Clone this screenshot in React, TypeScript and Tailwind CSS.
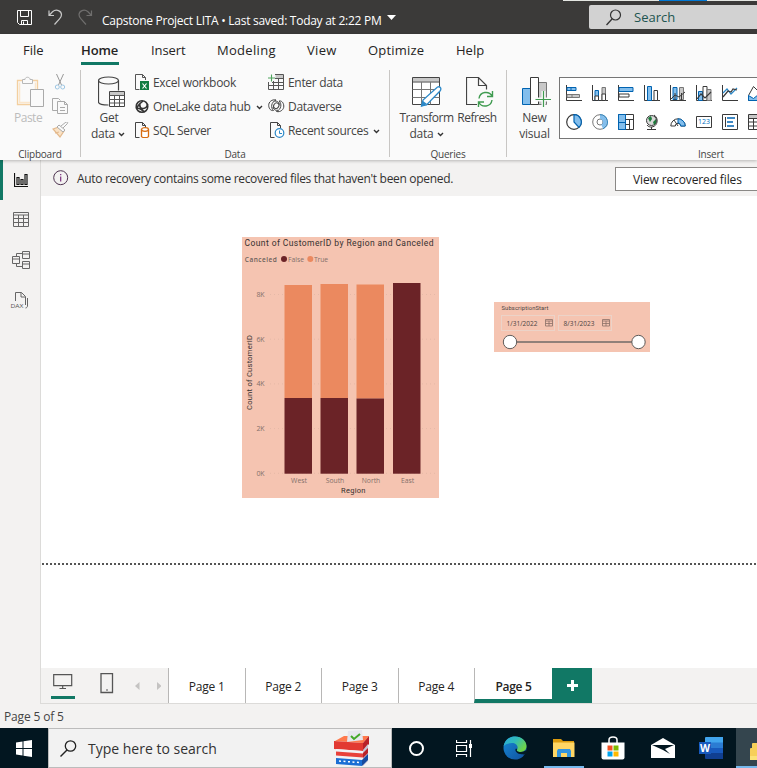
import React from "react";

type IconProps = { w: number; h: number; box: string; className?: string; children: React.ReactNode };

function Icon({ w, h, box, className = "", children }: IconProps) {
  return (
    <svg width={w} height={h} viewBox={box} fill="none" className={`block shrink-0 ${className}`}>
      {children}
    </svg>
  );
}

const Chevron = () => (
  <Icon w={7} h={5} box="0 0 7 5" className="mt-px">
    <path d="M1 1l2.5 2.5L6 1" stroke="#333" strokeWidth="1.4" />
  </Icon>
);

function TitleBar() {
  return (
    <header className="relative flex h-[34px] shrink-0 items-start bg-[#3b3a39] text-white">
      <div className="absolute left-[563px] top-0 flex h-px w-[194px] bg-[#e4e6e2]">
        <div className="ml-24 h-px w-12 bg-[#0078d4]" />
      </div>
      <Icon w={16} h={16} box="0 0 16 16" className="ml-[17px] mt-[10px]">
        <path d="M.5.5h14v14h-12l-2-2zM3.5.5v6h8v-6M4.500 14.500v-4h6v4M6.500 11.500v3" stroke="#fff" />
      </Icon>
      <Icon w={16} h={17} box="0 0 16 17" className="ml-[15px] mt-[9px]">
        <path d="M1 1.500v5h5M1.500 6l3-3.200c4-3.300 9-.8 9 3 0 2-1 3-2 4L6.500 15.500" stroke="#c8c8c8" strokeWidth="1.2" />
      </Icon>
      <Icon w={16} h={17} box="0 0 16 17" className="ml-[14px] mt-[9px]">
        <path d="M13.500 1.500v5h-5M13 6l-3-3.200c-4-3.300-9-.8-9 3 0 2 1 3 2 4L8 15.500" stroke="#6f6e6d" strokeWidth="1.2" />
      </Icon>
      <span className="ml-[8px] mt-[12px] w-[280px] whitespace-nowrap text-[12px] leading-[17px] tracking-[-0.27px]">
        Capstone Project LITA • Last saved: Today at 2:22 PM
      </span>
      <Icon w={9} h={5} box="0 0 9 5" className="ml-[5px] mt-[15px]">
        <path d="M0 0h9L4.500 5z" fill="#fff" />
      </Icon>
      <div className="ml-auto mt-[5px] flex h-6 w-[168px] items-center rounded-l-[2px] bg-[#d2d2d2] pl-[17px]">
        <Icon w={16} h={17} box="0 0 16 17">
          <circle cx="9.500" cy="6" r="5" stroke="#333" strokeWidth="1.200" />
          <path d="M6 10L.5 16" stroke="#333" strokeWidth="1.300" />
        </Icon>
        <span className="ml-[12px] text-[13px] leading-4 text-[#215550]">Search</span>
      </div>
    </header>
  );
}

function MenuTabs() {
  return (
    <nav className="flex h-[32px] shrink-0 whitespace-nowrap pl-[23px] text-[13px] leading-[18px] text-[#252423] *:pt-[7px]">
      <span className="w-[58px]">File</span>
      <span className="w-[70px]">
        <span className="inline-block h-6 w-[38px] border-b-[3px] border-[#117865] font-semibold tracking-[-0.1px]">Home</span>
      </span>
      <span className="w-[66px] tracking-[-0.1px]">Insert</span>
      <span className="w-[90px] tracking-[0.3px]">Modeling</span>
      <span className="w-[61px] tracking-[0.3px]">View</span>
      <span className="w-[88px] tracking-[0.2px]">Optimize</span>
      <span>Help</span>
    </nav>
  );
}

function Group({ label, className, children }: { label: string; className: string; children: React.ReactNode }) {
  return (
    <section className={`flex h-[87px] shrink-0 flex-col ${className}`}>
      <div className="flex h-[76px] shrink-0">{children}</div>
      <div className="shrink-0 text-center text-[10px] leading-[16px] tracking-[-0.2px] text-[#444]">{label}</div>
    </section>
  );
}

function Row({ icon, text, chevron }: { icon: React.ReactNode; text: string; chevron?: boolean }) {
  return (
    <div className="flex h-6 items-center whitespace-nowrap">
      <div className="w-[18px]">{icon}</div>
      <span className="mt-[2px] text-[12px] leading-5 tracking-[-0.32px] text-[#444]">{text}</span>
      {chevron && <span className="ml-[5px] mt-[2px]"><Chevron /></span>}
    </div>
  );
}

const docPath = "M4.500 15.500h-4V.5h7l3 3V6M7.500.5v3h3";

function ClipboardGroup() {
  return (
    <Group label="Clipboard" className="w-20">
      <div className="flex w-[48px] flex-col pl-[14px]">
        <Icon w={32} h={32} box="14 75 32 32" className="mt-[5px]">
          <path d="M22 80.500h-4.500v24H31M33 80.500h4.500v9" stroke="#f3cf9f" strokeWidth="1.300" />
          <path d="M19.500 82.500v20H30M35.500 82.500v7" stroke="#fbe6cb" strokeWidth="1.500" />
          <path d="M22.500 83.500v-4h2.500c0-3 5-3 5 0h2.500v4z" stroke="#b8b8b8" fill="#fafafa" />
          <path d="M30.500 89.500h13v17h-13z" stroke="#aaa" fill="#fafafa" />
        </Icon>
        <span className="text-[12px] leading-[22px] tracking-[-0.5px] text-[#bcbcbc]">Paste</span>
      </div>
      <div className="flex flex-col gap-2 pl-1 pt-[4px]">
        <Icon w={16} h={16} box="52 74 16 16">
          <path d="M56.500 74l5 11M63.500 74l-5 11" stroke="#999" />
          <circle cx="57.300" cy="87" r="2" stroke="#9ec7e4" /><circle cx="62.700" cy="87" r="2" stroke="#9ec7e4" />
        </Icon>
        <Icon w={17} h={16} box="52 98 17 16">
          <path d="M57.500 110.500h-5v-12h6l2 2M57.500 101.500h7l3 3v9h-10zM64.500 101.500v3h3M60 107.500h5M60 110.500h5" stroke="#aaa" />
        </Icon>
        <Icon w={17} h={16} box="52 122 17 16">
          <path d="M53 129l6-2 5 4-4 6zM55 133l4-1" fill="#f9e3c8" stroke="#e4b98c" strokeWidth="1.200" />
          <path d="M57 127l2-2 6 5-2 2zM61 126l5-4c2-.5 2 1 1 2l-4 4" stroke="#aaa" fill="#fafafa" />
        </Icon>
      </div>
    </Group>
  );
}

function DataGroup() {
  return (
    <Group label="Data" className="w-[309px] border-l border-[#c8c6c4]">
      <div className="flex w-[54px] flex-col items-center text-[12px] leading-4 text-[#444]">
        <Icon w={28} h={31} box="98 76 28 31" className="ml-[8px] mt-[6px]">
          <path d="M98.500 80.500v21.500c0 2 4 3 10 3M118.500 80.500v10" stroke="#444" strokeWidth="1.200" />
          <ellipse cx="108.500" cy="80.500" rx="10" ry="3.500" stroke="#444" strokeWidth="1.200" />
          <path d="M109.500 91.500h15v15h-15z" fill="#fff" stroke="#444" />
          <path d="M110 92h14v3h-14z" fill="#c8c8c8" />
          <path d="M109.500 95.500h15M109.500 99.500h15M109.500 103h15M114.500 95.500v11M119.500 95.500v11" stroke="#555" />
        </Icon>
        <span className="ml-[2px] mt-[3px] tracking-[-0.3px]">Get</span>
        <span className="flex items-center gap-[3px] tracking-[-0.2px]">data <Chevron /></span>
      </div>
      <div className="flex w-[133px] flex-col">
        <Row text="Excel workbook" icon={
          <Icon w={15} h={16} box="0 0 15 16">
            <path d={docPath} stroke="#555" />
            <path d="M5 7h9v9H5z" fill="#107c41" /><path d="M7.500 9.500l4 5M11.500 9.500l-4 5" stroke="#fff" strokeWidth="1.200" />
          </Icon>} />
        <Row text="OneLake data hub" chevron icon={
          <Icon w={15} h={15} box="0 0 15 15">
            <circle cx="7" cy="7.500" r="5.800" stroke="#333" strokeWidth="1.500" />
            <path d="M1 9.500L4.500 5 8 2M5 4c-1 4 1 6 3.500 5.500S12.500 7 12.500 5M1.500 9.500c3-1.500 5 1.500 7.500 3" stroke="#333" strokeWidth="1.600" />
          </Icon>} />
        <Row text="SQL Server" icon={
          <Icon w={15} h={16} box="0 0 15 16">
            <path d={docPath} stroke="#444" />
            <path d="M6.500 7.500v7c1 1.500 6 1.500 7 0v-7" fill="#fff" stroke="#d86c10" strokeWidth="1.300" />
            <ellipse cx="10" cy="7.500" rx="3.500" ry="1.800" fill="#fff" stroke="#d86c10" strokeWidth="1.300" />
          </Icon>} />
      </div>
      <div className="flex flex-col">
        <div className="[&>div>div]:w-5"><Row text="Enter data" icon={
          <Icon w={17} h={17} box="0 0 17 17">
            <path d="M7.500 1h8v3h-8z" fill="#c8c8c8" />
            <path d="M7 .5h8.500v15H.5V8M.5 11.500h15M4 8.500h11.500M7 4.500h8.500M5.500 7v8.500M10.500 4.500v11" stroke="#555" />
            <path d="M3.500.5v7M0 4h7" stroke="#4ea35d" strokeWidth="1.100" />
          </Icon>} /></div>
        <div className="[&>div>div]:w-5"><Row text="Dataverse" icon={
          <Icon w={17} h={14} box="0 0 17 14">
            <path d="M8 1C4 0 .5 3 .7 6.500S3 12 5.500 11.500C2.500 9 3 3 8 1zM8.500 12.500c4 1 7.500-2 7.300-5.500S13.500 1.500 11 2c3 2.500 2.500 8.500-2.500 10.500z" stroke="#444" />
            <ellipse cx="8.300" cy="6.700" rx="2.500" ry="3" transform="rotate(35 8.300 6.700)" stroke="#444" />
            <path d="M5 8c.5 3 3.500 4 5 3M11.500 5.500c-.5-3-3.500-4-5-3" stroke="#444" />
          </Icon>} /></div>
        <div className="[&>div>div]:w-5"><Row text="Recent sources" chevron icon={
          <Icon w={15} h={16} box="0 0 15 16" className="ml-[2px]">
            <path d={docPath} stroke="#444" />
            <circle cx="9.500" cy="11" r="4.300" fill="#fff" stroke="#2b88c8" strokeWidth="1.200" />
            <path d="M9.500 8.500v3H12" stroke="#2b88c8" />
          </Icon>} /></div>
      </div>
    </Group>
  );
}

function QueriesGroup() {
  return (
    <Group label="Queries" className="w-[117px] border-l border-[#c8c6c4] text-[12px] leading-4 text-[#444]">
      <div className="flex w-[73px] flex-col items-center">
        <Icon w={30} h={31} box="412 76 30 31" className="mt-[6px]">
          <path d="M412.500 77.500h27v27h-27z" fill="#fff" stroke="#444" />
          <path d="M413 78h26v3.500h-26z" fill="#c8c8c8" />
          <path d="M412.500 82h27" stroke="#444" />
          <path d="M412.500 89.500h27M412.500 97.500h27M421.500 82v22.500M430.500 82v22.500" stroke="#777" />
          <path d="M421.500 106l1.500-6 14.500-13c2.500-1 4.500 1.500 2.500 4L426.500 105z" fill="#fff" stroke="#2b88c8" strokeWidth="1.300" />
          <path d="M421 107l2-6 4 3z" fill="#2b88c8" />
        </Icon>
        <span className="mt-[3px] tracking-[-0.5px]">Transform</span>
        <span className="flex items-center gap-[3px] tracking-[-0.2px]">data <Chevron /></span>
      </div>
      <div className="flex w-[28px] flex-col items-center">
        <Icon w={28} h={31} box="465 76 28 31" className="ml-[5px] mt-[6px]">
          <path d="M476 104.500h-10.500v-27h12l8 8v4M477.500 77.500v8h8" stroke="#444" strokeWidth="1.200" />
          <path d="M478 98.500c1-7 10-8 13-2.500M491.500 91v5.500H486M491 100c-1 7-10 8-13 2.500M477.500 107.500V102H483" stroke="#3f9b50" strokeWidth="1.400" />
        </Icon>
        <span className="mt-[3px] tracking-[-0.5px]">Refresh</span>
      </div>
    </Group>
  );
}

const B = "#0063b1";
const F = "#83beec";
const K = "#3a3a3a";
const topVisuals = [
  <><path d="M.5 0v15.500H16" stroke={K} /><path d="M1 2.500h9v3H1z" fill={F} stroke={B} /><path d="M5 2v4" stroke={B} /><path d="M1 9.500h12.500v3H1z" fill="#c8c8c8" stroke="#777" /><path d="M6 9v4" stroke="#777" /></>,
  <><path d="M.5 0v15.500H16" stroke={K} /><path d="M3 5.500h3.500v10H3z" fill={F} stroke={B} /><path d="M3 11h3.500v4.500H3z" fill="#fff" stroke={K} /><path d="M10 2.500h3.500v13H10z" fill="#c8c8c8" stroke="#777" /><path d="M10 9h3.500v6.500H10z" fill="#fff" stroke={K} /></>,
  <><path d="M.5 0v15.500H16" stroke={K} /><path d="M1 2.500h14v4H1z" fill={F} stroke={B} /><path d="M1 9h10v3H1z" fill="#fff" stroke={K} /></>,
  <><path d="M.5 0v15.500H16" stroke={K} /><path d="M3.500 1.500h4v14h-4z" fill={F} stroke={B} /><path d="M10 5.500h3.500v10H10z" fill="#fff" stroke={K} /></>,
  <><path d="M.5 0v15.500H16" stroke={K} /><path d="M3 2.500h4v12H3z" fill={F} stroke={B} /><path d="M9.500 2.500h4v12h-4z" fill="#c8c8c8" stroke="#777" /><path d="M1 14l4-4 4 2 6-5M5 8v7M11.500 8v7" stroke={K} /></>,
  <><path d="M.5 0v15.500H16" stroke={K} /><path d="M2.500 6.500h4v9h-4z" fill={F} stroke={B} /><path d="M7 1.500h4v14H7z" fill="#fff" stroke={K} /><path d="M11 4.500h4v11h-4z" fill="#c8c8c8" stroke="#777" /><path d="M1 14l4-5 4 4 6-6" stroke={K} strokeWidth="1.200" /></>,
  <><path d="M.5 0v15.500H16" stroke={K} /><path d="M1 8l4-4 4 5 6-6" stroke="#2b88c8" strokeWidth="1.200" /><path d="M1 12l5-6 3 1 2-3 4 1" stroke={K} strokeWidth="1.200" /></>,
  <><path d="M.5 10.500l5-9 5 5v9H.5z" stroke={K} fill="#fff" /><path d="M.5 10.500l5 3 5-4v6H.5z" fill={F} stroke={B} /></>,
];
const bottomVisuals = [
  <><circle cx="8" cy="8" r="7.300" fill="#fff" stroke={K} strokeWidth="1.200" /><path d="M8 .7A7.300 7.300 0 0 1 13 13.300L8 8z" fill={F} stroke={B} strokeWidth="1.200" /></>,
  <><circle cx="8" cy="8" r="5" stroke="#fff" strokeWidth="4" /><circle cx="8" cy="8" r="7.300" stroke="#777" /><circle cx="8" cy="8" r="3" stroke="#777" /><path d="M8 3a5 5 0 0 1 2 9.500" stroke={F} strokeWidth="4" /><path d="M8 .7a7.300 7.300 0 0 1 3 14" stroke="#2b88c8" /></>,
  <><path d="M.5.5h15v15H.5z" fill="#fff" stroke={K} /><path d="M.5.5h7v15h-7z" fill={F} stroke={B} /><path d="M.5 8.500h7" stroke={B} /><path d="M7.500 5.500h8M11.500 5.500v10M7.500 10.500h4" stroke={K} /></>,
  <><circle cx="7.500" cy="6.500" r="5" fill="#d9d9d9" stroke={K} /><path d="M4 4l3-2 1 3-2 3zM9 8l3-3v4l-2 2z" fill="#1e7b3c" /><path d="M10 1c5 3 4 11-2 12-2 .3-4-.5-5-2M7.500 13v2.500M3 15.500h9" stroke={K} /></>,
  <><path d="M.8 12a7.200 7.200 0 0 1 14.400 0h-4.500a2.700 2.700 0 0 0-5.400 0z" fill="#fff" stroke={K} /><path d="M8 4.800a7.200 7.200 0 0 1 7.200 7.200h-4.500C10.700 10 9.500 9 8 9z" fill={F} stroke={B} /><path d="M4 6l4 6" stroke={K} /></>,
  <><path d="M.5 2.500h15v11H.5z" fill="#fff" stroke={K} /><text x="2" y="10" fontSize="7" textLength="12" fill="#006fbf" fontFamily="Open Sans, sans-serif">123</text></>,
  <><path d="M.5.5h15v15H.5z" fill="#fff" stroke={K} /><path d="M3.500 3v10" stroke={K} /><path d="M5 4h8M5 8h6M5 12h7" stroke={B} strokeWidth="1.700" /></>,
  <><path d="M.5.5h15v15H.5z" fill="#fff" stroke={K} /><path d="M1 1h14v3H1z" fill="#c8c8c8" /><path d="M.5 4.500h15M.5 8h15M.5 12h15M5.500 4.500v11M10.500 4.500v11" stroke={K} /></>,
];

function InsertGroup() {
  return (
    <section className="flex h-[87px] w-[251px] shrink-0 border-l border-[#c8c6c4] text-[12px] leading-4 text-[#444]">
      <div className="flex w-[52px] shrink-0 flex-col items-center pl-[3px]">
        <Icon w={30} h={31} box="522 76 30 31" className="ml-[4px] mt-[6px]">
          <path d="M522.500 88.500h8v16h-8z" fill={F} stroke={B} />
          <path d="M538.500 82.500h8v22h-8z" fill="#c8c8c8" stroke="#777" />
          <path d="M530.500 77.500h8v27h-8z" fill="#fff" stroke={K} />
          <path d="M543.500 91v16M535 99.500h16" stroke="#fafafa" strokeWidth="4" />
          <path d="M543.500 91v16M535.500 99.500H551" stroke="#3f9b50" strokeWidth="1.200" />
        </Icon>
        <span className="mt-[3px] tracking-[-0.2px]">New</span>
        <span className="tracking-[-0.2px]">visual</span>
      </div>
      <div className="w-[320px] shrink-0">
        <div className="mt-[7px] flex h-[62px] flex-col gap-[13px] border border-[#767676] bg-white pl-[6px] pt-[7px]">
          <div className="flex gap-[10px]">
            {topVisuals.map((v, i) => <Icon key={i} w={16} h={16} box="0 0 16 16">{v}</Icon>)}
          </div>
          <div className="flex gap-[10px]">
            {bottomVisuals.map((v, i) => <Icon key={i} w={16} h={16} box="0 0 16 16">{v}</Icon>)}
          </div>
        </div>
        <div className="mt-[7px] pl-[139px] text-[10px] leading-4 tracking-[-0.2px]">Insert</div>
      </div>
    </section>
  );
}

function Sidebar() {
  return (
    <aside className="flex w-[41px] shrink-0 flex-col border-r border-[#dcdbd9] bg-[#f3f2f1]">
      <div className="flex h-10 items-center border-l-[3px] border-[#117865] pl-[11px]">
        <Icon w={15} h={15} box="0 0 15 15">
          <path d="M.5 0v13.500H14M3 4.500h2v7H3zM7 6.500h2v5H7zM11 1.500h2v10h-2z" stroke="#111" strokeWidth="1.200" />
        </Icon>
      </div>
      <Icon w={17} h={16} box="0 0 17 16" className="ml-[13px] mt-[12px]">
        <path d="M.5.5h15v14H.5zM.5 3h15M.5 6.500h15M.5 10.500h15M5.500 3v11.500M10.500 3v11.500" stroke="#666" />
      </Icon>
      <Icon w={19} h={19} box="0 0 19 19" className="ml-[12px] mt-[23px]">
        <path d="M10.500.5h7v7h-7zM10.500 3h7M.5 5.500h7v7h-7zM.5 8h7M10.500 10.500h7v7h-7zM10.500 13h7M4.500 5.500v-3h6M4.500 12.500v3h6" stroke="#666" />
      </Icon>
      <Icon w={19} h={18} box="0 0 19 18" className="ml-[10px] mt-[22px]">
        <path d="M5.500 9V.5h6l4 4V13M11 .5V5h4.500M17.500 6v8c0 1-1 2-2 2" stroke="#666" />
        <path d="M1 10h14v6H1z" fill="#f3f2f1" />
        <text x=".5" y="15.800" fontSize="6" textLength="13" lengthAdjust="spacingAndGlyphs" fill="#555" fontFamily="Open Sans, sans-serif">DAX</text>
      </Icon>
    </aside>
  );
}

const bars = [
  { name: "West", x: 42.500, top: 48, split: 161 },
  { name: "South", x: 78.500, top: 47, split: 161 },
  { name: "North", x: 114.500, top: 47.500, split: 161.500 },
  { name: "East", x: 151, top: 46, split: 46 },
];

function BarChart() {
  return (
    <svg width="197" height="261" viewBox="0 0 197 261" className="absolute left-[201px] top-[41px] bg-[#f5c4b1]" fontFamily="Open Sans, sans-serif">
      <text x="2.500" y="9" fontSize="8.500" textLength="189" fill="#363130" fontFamily="Roboto, sans-serif">Count of CustomerID by Region and Canceled</text>
      <text x="2.800" y="25" fontSize="6.500" fontWeight="600" textLength="32" fill="#6b605b">Canceled</text>
      <circle cx="42" cy="22" r="3" fill="#6b2327" />
      <text x="46" y="25" fontSize="6.800" textLength="16" fill="#84706a">False</text>
      <circle cx="68.300" cy="22" r="3" fill="#eb895f" />
      <text x="72" y="25" fontSize="6.800" textLength="14" fill="#84706a">True</text>
      {["8K", "6K", "4K", "2K", "0K"].map((t, i) => (
        <g key={t}>
          <path d={`M28 ${57.500 + i * 44.700}h165`} stroke="#e5b9a7" strokeDasharray="1 3" />
          <text x="14.500" y={60 + i * 44.700} fontSize="7" textLength="8" fill="#84706a">{t}</text>
        </g>
      ))}
      {bars.map((b) => (
        <g key={b.name}>
          <rect x={b.x} y={b.top} width="27.500" height={b.split - b.top} fill="#eb895f" />
          <rect x={b.x} y={b.split} width="27.500" height={236.700 - b.split} fill="#6b2327" />
          <text x={b.x + 14.500} y="246" fontSize="6.800" textAnchor="middle" fill="#84706a">{b.name}</text>
        </g>
      ))}
      <text x="99" y="256" fontSize="7.500" textLength="24.500" fill="#363130" fontFamily="Roboto, sans-serif">Region</text>
      <text transform="translate(10 173) rotate(-90)" fontSize="7.500" textLength="75" fill="#363130" fontFamily="Roboto, sans-serif">Count of CustomerID</text>
    </svg>
  );
}

function DateSlicer() {
  return (
    <svg width="156" height="50" viewBox="0 0 156 50" className="absolute left-[453px] top-[106px] bg-[#f5c4b1]" fontFamily="Open Sans, sans-serif">
      <text x="7.500" y="8" fontSize="5.800" textLength="47" fill="#4b4542" fontFamily="Roboto, sans-serif">SubscriptionStart</text>
      {[{ x: 7.500, t: "1/31/2022" }, { x: 64.500, t: "8/31/2023" }].map((d) => (
        <g key={d.t}>
          <rect x={d.x} y="13.500" width="53" height="15" fill="none" stroke="#ecd3c8" />
          <text x={d.x + 5} y="24" fontSize="6.500" textLength="31" fill="#4b4542">{d.t}</text>
          <path d={`M${d.x + 44} 17.500h7v6.500h-7zM${d.x + 44} 19h7M${d.x + 44} 21.500h7M${d.x + 47.500} 19v5`} stroke="#8a7067" strokeWidth=".8" fill="none" />
        </g>
      ))}
      <path d="M16 40h128" stroke="#6f6a67" strokeWidth="1.700" />
      <circle cx="16" cy="40" r="6.700" fill="#fff" stroke="#5f5b59" />
      <circle cx="144.500" cy="40" r="6.700" fill="#fff" stroke="#5f5b59" />
    </svg>
  );
}

function PageTabs() {
  return (
    <div className="flex h-[36px] shrink-0 border-b border-[#dcdbd9] bg-[#f3f2f1] text-[12px]">
      <div className="flex w-[127px] items-start">
        <div className="ml-[10px] flex h-[31px] w-6 flex-col items-center border-b-[3px] border-[#117865] pt-[6px]">
          <Icon w={20} h={16} box="0 0 20 16">
            <path d="M.7.700h18v11H.700zM9.700 12v2.500M6.500 14.500h6.500" stroke="#555" strokeWidth="1.200" />
          </Icon>
        </div>
        <Icon w={14} h={21} box="0 0 14 21" className="ml-[25px] mt-[5px]">
          <path d="M1 .700h11.500v18.800H1z" stroke="#555" strokeWidth="1.300" /><path d="M6 17h2" stroke="#555" />
        </Icon>
        <Icon w={27} h={9} box="0 0 27 9" className="ml-[20px] mt-[14px]">
          <path d="M5.500 0v8L1 4zM23 0v8l4.500-4z" fill="#c4c3c2" />
        </Icon>
      </div>
      {["Page 1", "Page 2", "Page 3", "Page 4"].map((p) => (
        <div key={p} className="flex w-[76.500px] items-center justify-center border-l border-[#b8b7b6] bg-white pt-[3px] tracking-[-0.2px] text-[#252423]">{p}</div>
      ))}
      <div className="flex w-[78px] items-center justify-center border-b-4 border-l border-b-[#117865] border-l-[#b8b7b6] bg-white pt-[7px] font-semibold tracking-[-0.3px] text-[#252423]">Page 5</div>
      <div className="flex w-10 items-center justify-center bg-[#117865] pb-px">
        <Icon w={11} h={11} box="0 0 11 11"><path d="M5.500 0v11M0 5.500h11" stroke="#fff" strokeWidth="3" /></Icon>
      </div>
    </div>
  );
}

function Taskbar() {
  return (
    <footer className="flex h-10 shrink-0 bg-[#021620]">
      <div className="flex w-12 items-center justify-center">
        <Icon w={16} h={17} box="0 0 16 17">
          <path d="M0 2.500l6.500-1V8H0zM7.500 1.300L16 0v8H7.500zM0 9h6.500v6.500l-6.500-1zM7.500 9H16v8l-8.500-1.300z" fill="#fff" />
        </Icon>
      </div>
      <div className="flex w-[344px] items-center border border-[#bcbcbc] bg-[#f2f2f2] pl-[11px]">
        <Icon w={17} h={17} box="0 0 17 17">
          <circle cx="10.500" cy="6" r="5.200" stroke="#222" strokeWidth="1.300" /><path d="M7 10L.5 16.500" stroke="#222" strokeWidth="1.400" />
        </Icon>
        <span className="ml-[11px] mt-[2px] w-[246px] whitespace-nowrap text-[14px] leading-5 text-[#333]">Type here to search</span>
        <Icon w={36} h={38} box="0 0 36 38">
          <path d="M1 12l9-5h25l-6 7z" fill="#ff7a4d" />
          <path d="M14 2l14-1 1 10-16 2z" fill="#e6e6ee" />
          <path d="M17 7l3 3 6-5" stroke="#43a829" strokeWidth="2" />
          <path d="M0 12l29 2v8L0 20z" fill="#e23a32" /><path d="M29 14l6-7v8l-6 7z" fill="#b92228" />
          <path d="M2 20l27 2-1 15-26-2z" fill="#f1f1f5" /><path d="M29 21l5-6v17l-5 5z" fill="#c8c3d3" />
          <path d="M2 22.500l27 2v4l-27-2z" fill="#e8413b" /><path d="M29 24l5-5v5l-5 5z" fill="#b92228" />
          <path d="M2 29l26 2v6L2 35z" fill="#1b6ed4" /><path d="M28 31l6-6v6l-6 6z" fill="#174b9f" />
          <path d="M5 32l20 1.500" stroke="#fff" strokeWidth="1.500" strokeDasharray="2 2.500" />
        </Icon>
      </div>
      <div className="flex w-12 items-center justify-center">
        <div className="h-[15px] w-[15px] rounded-full border-2 border-white" />
      </div>
      <div className="flex w-12 items-center justify-center">
        <Icon w={16} h={17} box="0 0 16 17">
          <path d="M.5 0v2.500h10V0M.5 5.500h10v6H.500zM.5 17v-2.500h10V17M14.500 0v17" stroke="#fff" strokeWidth="1.200" />
          <path d="M13 4h3v4h-3z" fill="#fff" />
        </Icon>
      </div>
      <div className="flex w-14 items-center justify-center pr-[2px]">
        <Icon w={24} h={24} box="0 0 24 24">
          <defs>
            <linearGradient id="edgeTop" x1="0" y1="0" x2="1" y2=".6"><stop stopColor="#2aa9df" /><stop offset=".5" stopColor="#31bbb9" /><stop offset="1" stopColor="#70d345" /></linearGradient>
            <linearGradient id="edgeBody" x1="0" y1="0" x2="1" y2="1"><stop stopColor="#168ad6" /><stop offset="1" stopColor="#114f9c" /></linearGradient>
          </defs>
          <circle cx="12" cy="12" r="11.500" fill="url(#edgeBody)" />
          <path d="M.6 10C2 3 7 .5 12 .5c7 0 11.500 5 11.500 9.500 0 4-3 6-6 6-2.500 0-4-1-3.500-2 2-4-1-7-5-7-4 0-7 1.500-8.400 3z" fill="url(#edgeTop)" />
          <path d="M14 13.500c-1 1.500 1 2.500 3.500 2.500 2 0 4-.7 6-2v4c-2 .5-3 .5-5 .3-4-.3-6.500-2.500-6-5 .3-1 1-1 1.500.2z" fill="#031a25" />
        </Icon>
      </div>
      <div className="flex w-10 flex-col items-center border-b-2 border-[#76b9ed] pt-[11px]">
        <Icon w={22} h={19} box="0 0 22 19">
          <path d="M0 0h8l2 2h11v4H0z" fill="#dc9b0e" /><path d="M0 3.500h21.500V18H0z" fill="#ffd664" />
          <path d="M4 18v-6l1-2h12l1 2v6h-4v-4H8v4z" fill="#3294df" />
        </Icon>
      </div>
      <div className="flex w-[57px] items-center justify-center pb-px">
        <Icon w={24} h={24} box="0 0 24 24">
          <path d="M8 7V4c0-4 8-4 8 0v3" stroke="#fff" strokeWidth="1.500" /><path d="M.5 6.500h23v15q0 2-2 2h-19q-2 0-2-2z" fill="#fff" />
          <path d="M6.500 9.500h5v5h-5z" fill="#f25022" /><path d="M12.500 9.500h5v5h-5z" fill="#7fba00" /><path d="M6.500 15.500h5v5h-5z" fill="#00a4ef" /><path d="M12.500 15.500h5v5h-5z" fill="#ffb900" />
        </Icon>
      </div>
      <div className="flex w-[43px] items-center justify-center">
        <Icon w={24} h={20} box="0 0 24 20"><path d="M0 7l12-7 12 7v13H0z" fill="#fff" /><path d="M1 7h22l-9 4 5 5-7-4z" fill="#021620" /></Icon>
      </div>
      <div className="flex w-[52px] items-center justify-center pl-[2px]">
        <Icon w={24} h={22} box="0 0 24 22">
          <path d="M6 1q0-1 1-1h17v6H6z" fill="#41a5ee" /><path d="M6 5.500h18V11H6z" fill="#2b7cd3" /><path d="M6 11h18v5H6z" fill="#185abd" /><path d="M6 16h18v6H7q-1 0-1-1z" fill="#103f91" />
          <path d="M0 5h12v12H0z" fill="#185abd" />
          <text x="1" y="15" fontSize="10" fontWeight="700" fill="#fff" textLength="10" lengthAdjust="spacingAndGlyphs" fontFamily="Open Sans, sans-serif">W</text>
        </Icon>
      </div>
      <div className="flex flex-1 items-end justify-end border-b-2 border-[#76b9ed] bg-[#34454e] pb-[6px]">
        <Icon w={7} h={17} box="0 0 7 17"><path d="M0 6q0-1 1-1h1V1q0-1 1-1h4v17H0z" fill="#f7cf58" /><path d="M0 13h7v4H0z" fill="#fce277" /></Icon>
      </div>
    </footer>
  );
}

export default function App() {
  return (
    <div className="flex h-[768px] w-[757px] flex-col overflow-hidden bg-white font-['Open_Sans','Noto_Sans',sans-serif]">
      <TitleBar />
      <div className="z-10 h-[126px] shrink-0 bg-[#fafafa] shadow-[0_1px_3px_rgba(0,0,0,0.25)]">
        <MenuTabs />
        <div className="flex pt-[4px]">
          <ClipboardGroup />
          <DataGroup />
          <QueriesGroup />
          <InsertGroup />
        </div>
      </div>
      <div className="flex h-[544px] shrink-0">
        <Sidebar />
        <main className="flex w-[716px] flex-col">
          <div className="flex h-9 shrink-0 items-center overflow-hidden bg-[#f3f2f1]">
            <Icon w={16} h={16} box="0 0 16 16" className="ml-3 mb-px">
              <circle cx="7.700" cy="7.700" r="7" stroke="#4d3350" /><path d="M7.700 6.500v5M7.700 4v1.300" stroke="#7b2d7c" strokeWidth="1.200" />
            </Icon>
            <span className="ml-[8px] w-[538px] shrink-0 whitespace-nowrap pt-px text-[12px] leading-5 tracking-[-0.31px] text-[#323130]">Auto recovery contains some recovered files that haven't been opened.</span>
            <div className="mt-[1px] flex h-6 w-[150px] shrink-0 items-center whitespace-nowrap border border-[#8a8886] bg-white pl-[17px] pt-[3px] text-[12px] tracking-[-0.13px] text-[#252423]">View recovered files</div>
          </div>
          <div className="relative flex-1 overflow-hidden bg-white">
            <BarChart />
            <DateSlicer />
            <div className="absolute left-px right-0 top-[367px] h-[2px] bg-[repeating-linear-gradient(90deg,#555_0_2px,transparent_2px_4px)]" />
          </div>
          <PageTabs />
        </main>
      </div>
      <div className="h-6 shrink-0 bg-[#f3f2f1] pl-1 text-[12px] leading-[26px] tracking-[-0.15px] text-[#444]">Page 5 of 5</div>
      <Taskbar />
    </div>
  );
}
